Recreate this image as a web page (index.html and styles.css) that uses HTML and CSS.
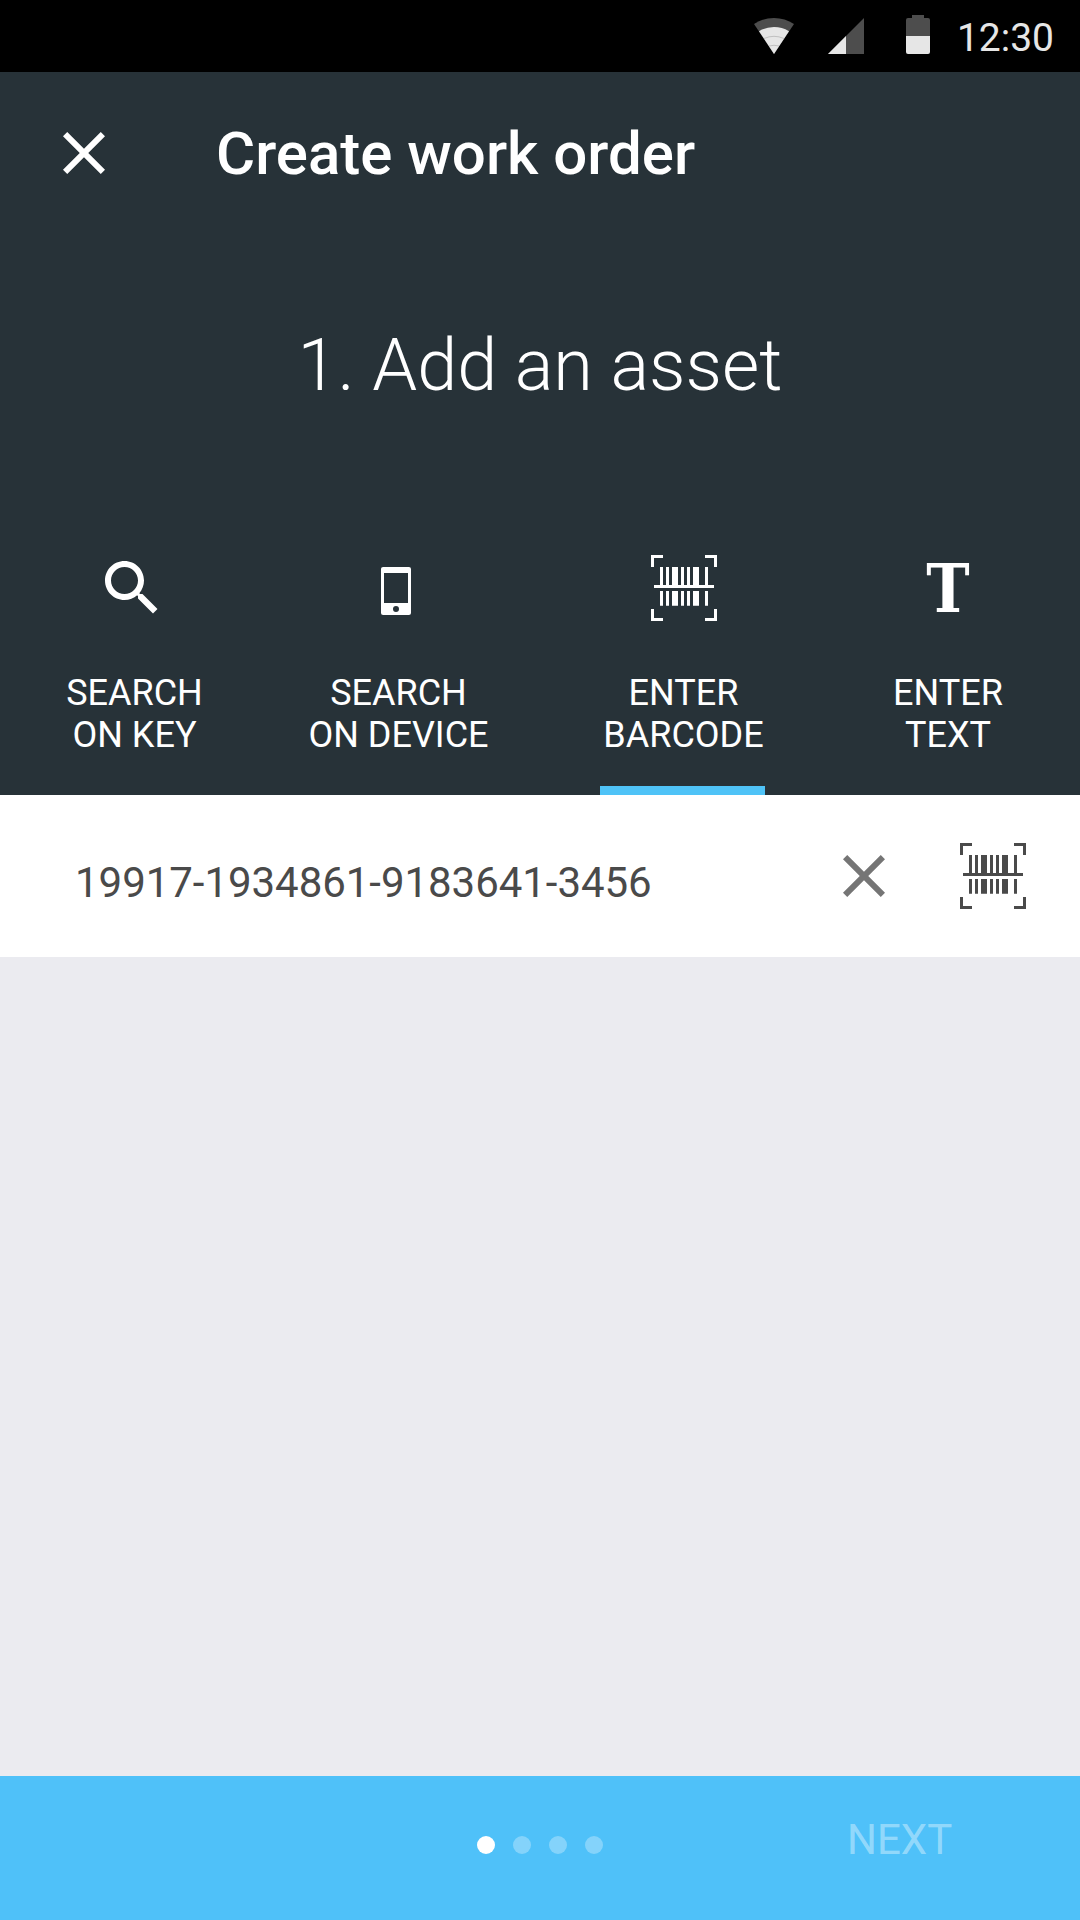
FILE: index.html
```html
<!DOCTYPE html>
<html lang="en">
<head>
<meta charset="utf-8">
<title>Create work order</title>
<link rel="stylesheet" href="styles.css">
</head>
<body>
<svg class="defs" aria-hidden="true">
  <symbol id="close" viewBox="0 0 24 24">
    <path d="M19 6.41L17.59 5 12 10.59 6.41 5 5 6.41 10.59 12 5 17.59 6.41 19 12 13.41 17.59 19 19 17.59 13.41 12z"/>
  </symbol>
  <symbol id="barcode" viewBox="0 0 24 24">
    <path d="M1 1h4v1H2v3H1zM19 1h4v4h-1V2h-3zM1 19h1v3h3v1H1zM22 19h1v4h-4v-1h3z"/>
    <path d="M4 5h1v6H4zM6 5h1v6H6zM8 5h2v6H8zM11 5h1v6h-1zM13 5h1v6h-1zM15 5h2v6h-2zM19 5h1v6h-1z"/>
    <path d="M2 11h20v1H2z"/>
    <path d="M4 13h1v4.9H4zM6 13h1v4.9H6zM8 13h2v4.9H8zM11 13h1v4.9h-1zM13 13h1v4.9h-1zM15 13h2v4.9h-2zM19 13h1v4.9h-1z"/>
  </symbol>
</svg>

<div class="screen">
  <div class="status-bar">
    <svg class="wifi" viewBox="0 0 40 36">
      <path class="dim" d="M0 6Q9 0 20 0T40 6L20 36z"/>
      <path class="lit" d="M5 13.2Q12 9 20 9T35 13.2L20 36z"/>
      <path class="wave" d="M10 20.5Q15 18.3 20 18.3T30 20.5M15 28Q20 26.5 25 28"/>
    </svg>
    <svg class="signal" viewBox="0 0 36 36">
      <path class="dim" d="M36 0v36H0z"/>
      <path class="lit" d="M18 18v18H0z"/>
    </svg>
    <svg class="battery" viewBox="0 0 24 39">
      <path class="dim" d="M6 0h12v3h4q2 0 2 2v16H0V5q0-2 2-2h4z"/>
      <path class="lit" d="M0 21h24v16q0 2-2 2H2q-2 0-2-2z"/>
    </svg>
    <span class="clock">12:30</span>
  </div>

  <header class="header">
    <div class="app-bar">
      <svg class="icon"><use href="#close"/></svg>
      <h1 class="title">Create work order</h1>
    </div>
    <h2 class="step">1. Add an asset</h2>
    <nav class="tabs">
      <a class="tab">
        <svg class="icon shifted" viewBox="0 0 24 24"><path d="M15.5 14h-.79l-.28-.27C15.41 12.59 16 11.11 16 9.5 16 5.91 13.09 3 9.5 3S3 5.91 3 9.5 5.91 16 9.5 16c1.61 0 3.09-.59 4.23-1.57l.27.28v.79l5 4.99L20.49 19l-4.99-5zm-6 0C7.01 14 5 11.99 5 9.5S7.01 5 9.5 5 14 7.01 14 9.5 11.99 14 9.5 14z"/></svg>
        <span>SEARCH<br>ON KEY</span>
      </a>
      <a class="tab">
        <svg class="icon shifted" viewBox="0 0 24 24"><path fill-rule="evenodd" d="M7.7 5h8.6q.7 0 .7.7v14.6q0 .7-.7.7H7.7q-.7 0-.7-.7V5.7q0-.7.7-.7zM8 7v10h8V7zM12 18a1 1 0 1 0 0 2 1 1 0 0 0 0-2z"/></svg>
        <span>SEARCH<br>ON DEVICE</span>
      </a>
      <a class="tab active">
        <svg class="icon"><use href="#barcode"/></svg>
        <span>ENTER<br>BARCODE</span>
      </a>
      <a class="tab">
        <span class="icon letter">T</span>
        <span>ENTER<br>TEXT</span>
      </a>
    </nav>
  </header>

  <div class="entry">
    <span class="value">19917-1934861-9183641-3456</span>
    <svg class="icon clear"><use href="#close"/></svg>
    <svg class="icon scan"><use href="#barcode"/></svg>
  </div>

  <main class="content"></main>

  <footer class="footer">
    <div class="dots">
      <i class="dot current"></i><i class="dot"></i><i class="dot"></i><i class="dot"></i>
    </div>
    <span class="next">NEXT</span>
  </footer>
</div>
</body>
</html>
```
FILE: styles.css
```css
* { box-sizing: border-box; }

body {
  margin: 0;
  font-family: Roboto, sans-serif;
}

.defs { display: none; }

.screen {
  display: flex;
  flex-direction: column;
  width: 1080px;
  height: 1920px;
  background: #ebebf0;
}

.icon {
  display: block;
  flex: none;
  width: 72px;
  height: 72px;
  fill: currentColor;
}

.status-bar {
  display: flex;
  align-items: flex-start;
  justify-content: flex-end;
  height: 72px;
  padding-right: 26px;
  background: #000;
  color: #e6e6e6;
}

.dim { fill: #4d4d4d; }
.lit { fill: #e6e6e6; }
.wave { fill: none; stroke: #c0c0c0; stroke-width: 1; }

.wifi { width: 40px; height: 36px; margin: 18px 34px 0 0; }
.signal { width: 36px; height: 36px; margin: 18px 42px 0 0; }
.battery { width: 24px; height: 39px; margin: 15px 0 0; }

.clock {
  width: 124px;
  padding-top: 2px;
  font-size: 39px;
  line-height: 72px;
  text-align: right;
}

.header {
  height: 723px;
  background: #273238;
  color: #fff;
}

.app-bar {
  display: flex;
  align-items: center;
  gap: 96px;
  height: 162px;
  padding-left: 48px;
}

.title {
  margin: 0;
  padding-top: 2px;
  font-size: 60px;
  font-weight: 500;
  line-height: 70px;
}

.step {
  margin: 0;
  font-size: 72px;
  font-weight: 300;
  line-height: 263px;
  text-align: center;
}

.tabs {
  display: grid;
  grid-template-columns: 269px 259px 311px 218px;
  height: 298px;
}

.tab {
  position: relative;
  display: flex;
  flex-direction: column;
  align-items: center;
  gap: 48px;
  padding-top: 55px;
  font-size: 36px;
  line-height: 42px;
  text-align: center;
}

.shifted { margin-right: 5px; }

.tab.active .icon { margin-left: 1px; }

.tab.active::after {
  content: "";
  position: absolute;
  bottom: 0;
  left: 72px;
  width: 165px;
  height: 9px;
  background: #4fc3f7;
}

.letter {
  font: bold 67px/74px "DejaVu Serif", serif;
  transform: scaleX(0.87);
}

.entry {
  display: flex;
  height: 162px;
  padding-left: 75px;
  background: #fff;
  color: #4a4a4a;
}

.value {
  width: 753px;
  padding-top: 3px;
  font-size: 42px;
  letter-spacing: -0.04px;
  line-height: 169px;
}

.clear { margin: 45px 57px 0 0; color: #757575; }
.scan { margin-top: 45px; }

.content { flex: 1; }

.footer {
  display: grid;
  grid-template-columns: 1fr auto 1fr;
  height: 144px;
  background: #4fc1f9;
}

.dots {
  display: flex;
  grid-column: 2;
  gap: 18px;
  padding-top: 60px;
}

.dot {
  width: 18px;
  height: 18px;
  border-radius: 50%;
  background: rgba(255, 255, 255, 0.3);
}

.dot.current { background: #fff; }

.next {
  padding: 40px 0 0 244px;
  color: rgba(255, 255, 255, 0.4);
  font-size: 42px;
  line-height: 48px;
}
```
